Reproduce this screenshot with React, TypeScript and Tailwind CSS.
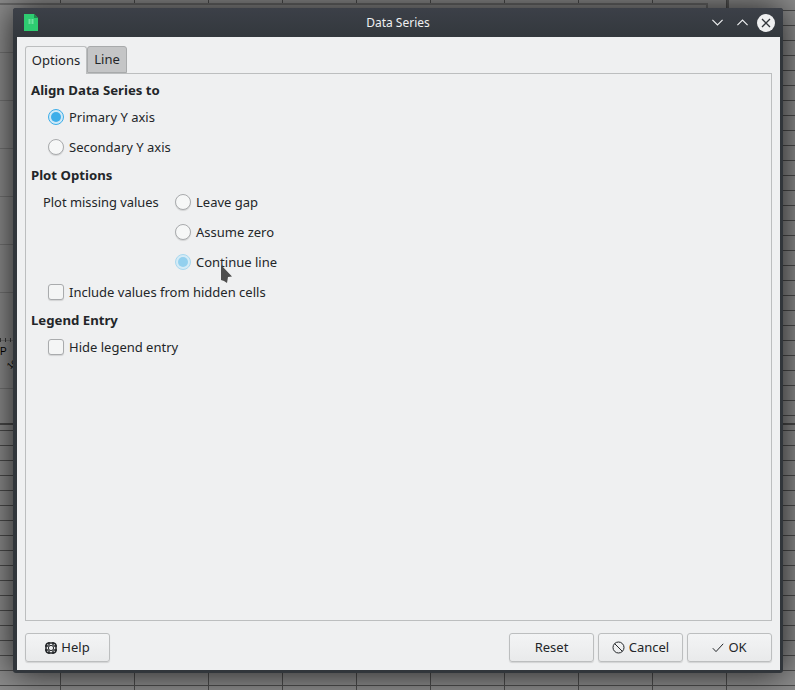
import type { ReactNode } from "react"

function Radio({ on, faded }: { on?: boolean; faded?: boolean }) {
  if (on) {
    return (
      <span className={`w-4 h-4 rounded-full border flex items-center justify-center shrink-0 ${faded ? "border-[#a9d8ef] bg-[#d4ebf6]" : "border-[#3daee9] bg-[#cfe9f7]"}`}>
        <span className={`w-[10px] h-[10px] rounded-full ${faded ? "bg-[#93d0ee]" : "bg-[#3daee9]"}`}></span>
      </span>
    )
  }
  return <span className="w-4 h-4 rounded-full border border-[#a9abad] bg-[#f6f7f7] shadow-[0_1px_1px_rgba(0,0,0,0.12)] shrink-0"></span>
}

function Check() {
  return <span className="w-4 h-4 rounded-[3px] border border-[#a9abad] bg-[#f4f5f5] shadow-[0_1px_1px_rgba(0,0,0,0.12)] shrink-0"></span>
}

function Row({ control, label }: { control: ReactNode; label: string }) {
  return (
    <div className="h-[30px] flex items-center gap-[5px]">
      {control}
      <span className="pt-px">{label}</span>
    </div>
  )
}

function Heading({ children, className = "" }: { children: ReactNode; className?: string }) {
  return <div className={`h-5 leading-5 font-bold text-[13.2px] ${className}`}>{children}</div>
}

function Button({ icon, label, className = "" }: { icon?: ReactNode; label: string; className?: string }) {
  return (
    <button className={`w-[85px] h-[29px] flex items-center justify-center gap-1 rounded-[3px] border border-[#bcbebf] bg-gradient-to-b from-[#f3f4f5] to-[#e9eaeb] shadow-[0_1px_1px_rgba(0,0,0,0.12)] ${className}`}>
      {icon}
      <span>{label}</span>
    </button>
  )
}

function Lifebuoy() {
  return (
    <svg width="12" height="12" viewBox="0 0 12 12" fill="none" stroke="#232629">
      <rect x="1" y="1" width="10" height="10" rx="3" strokeWidth="1.5" />
      <circle cx="6" cy="6" r="2.6" strokeWidth="1" />
      <path d="M0 4h3.5M0 8h3.5M8.5 4H12M8.5 8H12M4 0v3.5M8 0v3.5M4 8.5V12M8 8.5V12" strokeWidth="1.4" />
    </svg>
  )
}

function CancelIcon() {
  return (
    <svg width="13" height="13" viewBox="0 0 13 13" fill="none" stroke="#232629" strokeWidth="1">
      <circle cx="6.5" cy="6.5" r="5.5" />
      <path d="M2.6 2.6l7.8 7.8" />
    </svg>
  )
}

function CheckIcon() {
  return (
    <svg width="12" height="10" viewBox="0 0 12 10" fill="none" stroke="#232629" strokeWidth="1">
      <path d="M0.8 5.2l3.2 3.4L11.2 0.8" />
    </svg>
  )
}

function TitleBar() {
  return (
    <div className="h-[29px] grid grid-cols-[1fr_auto_1fr] items-center text-[#eff0f1] bg-gradient-to-b from-[#3c4048] to-[#33383d] rounded-t-[3px]">
      <svg width="14" height="17" viewBox="0 0 14 17" className="ml-[11px]">
        <path d="M0 0h10l4 4v13H0z" fill="#2ecc71" />
        <path d="M10 0l4 4h-4z" fill="#1e8a4c" />
        <path d="M4.5 5h2v5h-2zM7.5 5h2v5h-2z" fill="#6fe09f" />
      </svg>
      <span className="text-[12px]">Data Series</span>
      <div className="flex items-center justify-end gap-[14px] mr-[8px]">
        <svg width="11" height="7" viewBox="0 0 11 7" fill="none" stroke="#eff0f1" strokeWidth="1.1">
          <path d="M0.4 0.8L5.5 6l5.1-5.2" />
        </svg>
        <svg width="11" height="7" viewBox="0 0 11 7" fill="none" stroke="#eff0f1" strokeWidth="1.1">
          <path d="M0.4 6.2L5.5 1l5.1 5.2" />
        </svg>
        <svg width="18" height="18" viewBox="0 0 18 18" fill="none" stroke="#31363b" strokeWidth="1.3" className="ml-[-5px]">
          <circle cx="9" cy="9" r="9" fill="#eff0f1" stroke="none" />
          <path d="M5 5l8 8M13 5l-8 8" />
        </svg>
      </div>
    </div>
  )
}

function Tabs() {
  return (
    <div className="h-[28px] flex items-end">
      <div className="w-[62px] h-[28px] bg-[#eff0f1] border border-b-0 border-[#bcbebf] rounded-t-[3px] flex items-center justify-center relative z-10 mb-[-1px]">
        Options
      </div>
      <div className="w-[40px] h-[27px] bg-[#c4c5c6] border border-[#a8aaab] rounded-t-[3px] flex items-center justify-center">
        Line
      </div>
    </div>
  )
}

function OptionsPane() {
  return (
    <div className="h-[548px] border border-[#bcbebf] pt-[6px] pl-[5px]">
      <Heading>Align Data Series to</Heading>
      <div className="mt-[2px] pl-[17px]">
        <Row control={<Radio on />} label="Primary Y axis" />
        <Row control={<Radio />} label="Secondary Y axis" />
      </div>
      <Heading className="mt-[3px]">Plot Options</Heading>
      <div className="mt-[2px] pl-[12px] flex">
        <div className="w-[132px] h-[30px] leading-[30px] text-[12.9px]">Plot missing values</div>
        <div>
          <Row control={<Radio />} label="Leave gap" />
          <Row control={<Radio />} label="Assume zero" />
          <Row control={<Radio on faded />} label="Continue line" />
        </div>
      </div>
      <div className="pl-[17px]">
        <Row control={<Check />} label="Include values from hidden cells" />
      </div>
      <Heading className="mt-[3px]">Legend Entry</Heading>
      <div className="mt-[2px] pl-[17px]">
        <Row control={<Check />} label="Hide legend entry" />
      </div>
    </div>
  )
}

function Desktop() {
  return (
    <div className="absolute inset-0 bg-[#8c8c8c] bg-[repeating-linear-gradient(90deg,transparent_0,transparent_73px,#4c4c4c_73px,#4c4c4c_74px)] bg-[position:-13px_0]">
      {/* spreadsheet rows behind the chart */}
      <div className="absolute left-0 right-0 top-[423px] bottom-0 bg-[repeating-linear-gradient(180deg,#4c4c4c_0,#4c4c4c_1px,transparent_1px,transparent_15px)] bg-[position:0_5px] border-t-[2px] border-[#4a4a4a]"></div>
      <div className="absolute left-[708px] right-0 top-[10px] h-[413px] bg-[repeating-linear-gradient(180deg,#4c4c4c_0,#4c4c4c_1px,transparent_1px,transparent_15px)]"></div>
      <div className="absolute left-[727px] top-0 w-[2px] h-[10px] bg-[#5a5a5a]"></div>
      {/* chart frame */}
      <div className="absolute left-0 top-[3px] w-[708px] h-[420px] bg-[#8c8c8c] border-t-2 border-r-2 border-[#6a6a6a] bg-[repeating-linear-gradient(180deg,transparent_0,transparent_47px,#747474_47px,#747474_48px)]"></div>
      <div className="absolute left-0 top-[338px] w-[13px] h-1 bg-[repeating-linear-gradient(90deg,#3a3a3a_0,#3a3a3a_1px,transparent_1px,transparent_5px)]"></div>
      <span className="absolute left-0 top-[346px] text-[10px] leading-[12px] text-black font-['Liberation_Sans',sans-serif]">P</span>
      <span className="absolute left-[7px] top-[359px] text-[9px] leading-[10px] text-black -rotate-45 font-['Liberation_Sans',sans-serif]">1c</span>
    </div>
  )
}

export default function App() {
  return (
    <div className="relative w-[795px] h-[690px] overflow-hidden font-['Noto_Sans',sans-serif] text-[13px] text-[#232629]">
      <Desktop />
      <div className="absolute left-[13px] top-[8px] w-[770px] h-[665px] flex flex-col bg-[#31363b] rounded-[3px] shadow-[0_0_34px_rgba(0,0,0,0.8)]">
        <TitleBar />
        <div className="ml-[4px] mr-[3px] h-[633px] bg-[#eff0f1] px-[8px] pt-[8px]">
          <Tabs />
          <OptionsPane />
          <div className="mt-[12px] flex justify-between">
            <Button icon={<Lifebuoy />} label="Help" />
            <div className="flex gap-1">
              <Button label="Reset" />
              <Button icon={<CancelIcon />} label="Cancel" />
              <Button icon={<CheckIcon />} label="OK" />
            </div>
          </div>
        </div>
      </div>
      {/* mouse cursor */}
      <svg width="12" height="19" viewBox="0 0 12 19" className="absolute left-[220px] top-[265px]">
        <path d="M1 0l11 11.5-4 .5-1 6-3-2-3-1z" fill="#4d4d4d" />
      </svg>
    </div>
  )
}
